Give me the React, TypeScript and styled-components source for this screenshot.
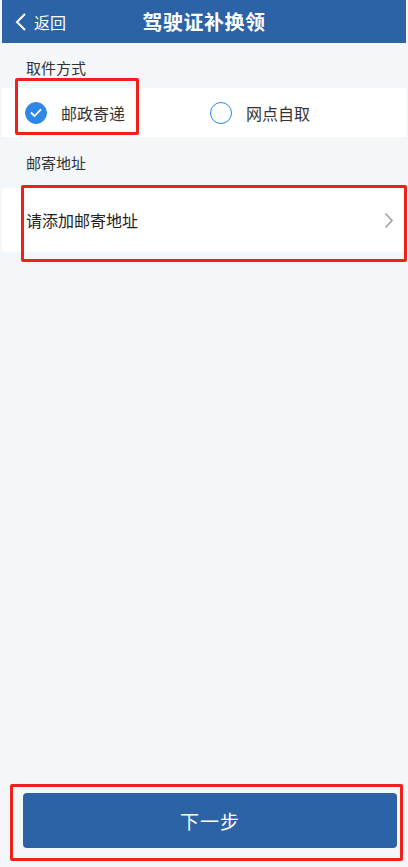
import React, { useState } from 'react'
import styled, { createGlobalStyle } from 'styled-components'

const GlobalStyle = createGlobalStyle`
  html, body {
    margin: 0;
    padding: 0;
    background: #f4f7f9;
  }
  * { box-sizing: border-box; }
`

const Page = styled.div`
  min-height: 100vh;
  display: flex;
  flex-direction: column;
  padding: 0 2px;
  background: #f4f7f9;
  font-family: "Noto Sans CJK SC", "Noto Sans", sans-serif;
  color: #333;
`

const Header = styled.div`
  position: relative;
  height: 43px;
  background: #2c63a6;
  display: flex;
  align-items: center;
  justify-content: center;
  color: #fff;
`

const Back = styled.div`
  position: absolute;
  left: 13px;
  top: 0;
  bottom: 0;
  display: flex;
  align-items: center;
  gap: 7px;
  font-size: 16px;
`

const Title = styled.div`
  font-size: 20px;
  font-weight: 700;
  letter-spacing: 0.5px;
`

const Label = styled.div<{ $h: number; $pb: number }>`
  height: ${p => p.$h}px;
  padding: 0 0 ${p => p.$pb}px 24px;
  display: flex;
  align-items: flex-end;
  font-size: 15px;
  line-height: 20px;
  color: #333;
`

const RadioRow = styled.div`
  height: 49px;
  background: #fff;
  display: flex;
  align-items: center;
`

const Option = styled.div<{ $w: number }>`
  position: relative;
  width: ${p => p.$w}px;
  height: 100%;
  display: flex;
  align-items: center;
  padding-left: 23px;
  gap: 14px;
  font-size: 16px;
  color: #333;
  cursor: pointer;
`

const Circle = styled.div<{ $on: boolean }>`
  width: 22px;
  height: 22px;
  border-radius: 50%;
  border: 1.5px solid #2f88e6;
  background: ${p => (p.$on ? '#2f88e6' : '#fff')};
  display: flex;
  align-items: center;
  justify-content: center;
`

const AddressRow = styled.div`
  position: relative;
  height: 64px;
  background: #fff;
  display: flex;
  align-items: center;
  justify-content: space-between;
  padding: 0 12px 0 24px;
  font-size: 16px;
  color: #222;
`

const Spacer = styled.div`
  flex: 1;
`

const Footer = styled.div`
  padding: 0 9px 19px 21px;
`

const NextButton = styled.button`
  position: relative;
  width: 100%;
  height: 55px;
  border: none;
  border-radius: 4px;
  background: #2c63a6;
  color: #fff;
  font-family: inherit;
  font-size: 19px;
  letter-spacing: 1px;
`

const Mark = styled.div<{ $t: number; $r: number; $b: number; $l: number }>`
  position: absolute;
  top: ${p => p.$t}px;
  right: ${p => p.$r}px;
  bottom: ${p => p.$b}px;
  left: ${p => p.$l}px;
  border: 3px solid #f2201a;
  border-radius: 2px;
  pointer-events: none;
`

const Check = () => (
  <svg width="12" height="10" viewBox="0 0 12 10">
    <path d="M1.5 5 L4.6 8 L10.5 1.8" fill="none" stroke="#fff" strokeWidth="1.8" strokeLinecap="round" strokeLinejoin="round" />
  </svg>
)

const App = () => {
  const [way, setWay] = useState('post')

  return (
    <Page>
      <GlobalStyle />
      <Header>
        <Back>
          <svg width="12" height="20" viewBox="0 0 12 20">
            <path d="M10 2 L2 10 L10 18" fill="none" stroke="#fff" strokeWidth="2" />
          </svg>
          返回
        </Back>
        <Title>驾驶证补换领</Title>
      </Header>

      <Label $h={45} $pb={10}>取件方式</Label>
      <RadioRow>
        <Option $w={185} onClick={() => setWay('post')}>
          <Circle $on={way === 'post'}>{way === 'post' && <Check />}</Circle>
          邮政寄递
          <Mark $t={-10} $r={48} $b={2} $l={13} />
        </Option>
        <Option $w={200} onClick={() => setWay('self')}>
          <Circle $on={way === 'self'}>{way === 'self' && <Check />}</Circle>
          网点自取
        </Option>
      </RadioRow>

      <Label $h={51} $pb={15}>邮寄地址</Label>
      <AddressRow>
        请添加邮寄地址
        <svg width="10" height="17" viewBox="0 0 10 17">
          <path d="M1.5 1.5 L8 8.5 L1.5 15.5" fill="none" stroke="#a6a6a6" strokeWidth="1.8" />
        </svg>
        <Mark $t={-3} $r={-1} $b={-10} $l={19} />
      </AddressRow>

      <Spacer />

      <Footer>
        <NextButton>
          下一步
          <Mark $t={-9} $r={-6} $b={-13} $l={-13} />
        </NextButton>
      </Footer>
    </Page>
  )
}

export default App
